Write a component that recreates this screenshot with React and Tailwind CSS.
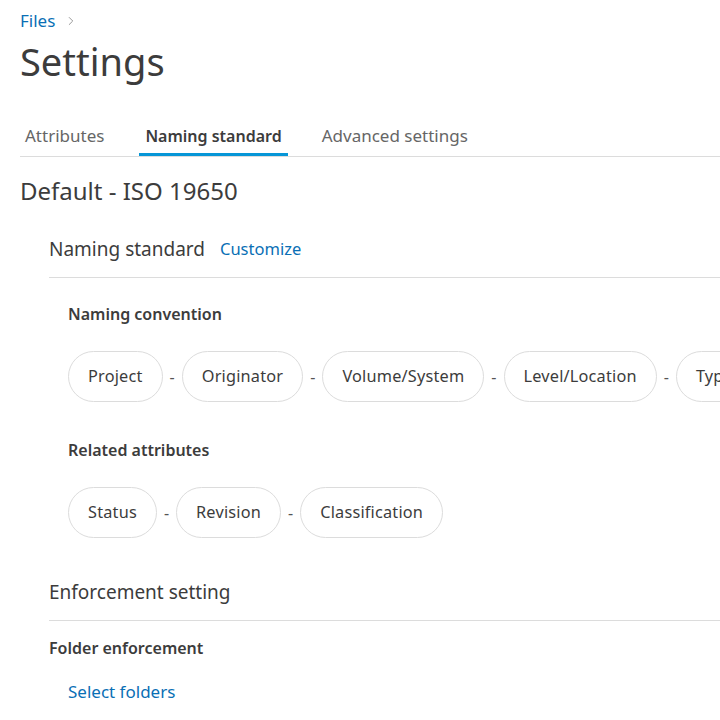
import { ChevronRight } from 'lucide-react';

const convention = ['Project', 'Originator', 'Volume/System', 'Level/Location', 'Type'];
const related = ['Status', 'Revision', 'Classification'];

function Pills({ items }) {
  return (
    <div className="flex items-center gap-[7px] whitespace-nowrap">
      {items.map((item, i) => (
        <div key={item} className="flex items-center gap-[7px] shrink-0">
          {i > 0 && <span className="text-[16px] text-[#555]">-</span>}
          <div className="h-[51px] px-[19px] flex items-center rounded-full border border-[#dcdcdc] text-[16.3px] text-[#3c3c3c] tracking-[0.2px]">
            {item}
          </div>
        </div>
      ))}
    </div>
  );
}

export default function App() {
  return (
    <div className="w-[720px] h-[720px] overflow-hidden bg-white text-[#3c3c3c]" style={{ fontFamily: '"Noto Sans", sans-serif' }}>
      <div className="pl-5">
        {/* Breadcrumb */}
        <div className="h-[41px] flex items-center gap-[9px]">
          <span className="text-[17px] text-[#0a6fb5] leading-[24px]">Files</span>
          <ChevronRight size={14} strokeWidth={1.5} className="text-[#8a8a8a]" />
        </div>
        <h1 className="text-[38px] leading-[40px] text-[#3c3c3c]">Settings</h1>

        {/* Tabs */}
        <div className="mt-[35px] flex border-b border-[#dcdcdc]">
          <div className="h-[40px] px-[5px] text-[17px] text-[#666] leading-[40px]">Attributes</div>
          <div className="ml-[30px] h-[40px] px-[6px] text-[16px] font-semibold text-[#3c3c3c] leading-[40px] border-b-[3px] border-[#0696d7]">
            Naming standard
          </div>
          <div className="ml-[34px] h-[40px] text-[17px] text-[#666] leading-[40px]">Advanced settings</div>
        </div>

        <h2 className="mt-[18px] text-[24px] leading-[32px]">Default - ISO 19650</h2>

        {/* Naming standard section */}
        <div className="ml-[29px] mt-[28px]">
          <div className="flex items-start gap-[15px] h-[43px] border-b border-[#dcdcdc]">
            <span className="text-[19px] leading-[28px]">Naming standard</span>
            <span className="text-[16.5px] leading-[28px] text-[#0a6fb5]">Customize</span>
          </div>
          <div className="pl-[19px]">
            <div className="mt-[24px] text-[16px] font-semibold leading-[24px]">Naming convention</div>
            <div className="mt-[25px]">
              <Pills items={convention} />
            </div>
            <div className="mt-[36px] text-[16px] font-semibold leading-[24px]">Related attributes</div>
            <div className="mt-[25px]">
              <Pills items={related} />
            </div>
          </div>

          {/* Enforcement */}
          <div className="mt-[40px] h-[43px] border-b border-[#dcdcdc] text-[19px] leading-[28px]">
            Enforcement setting
          </div>
          <div className="mt-[15px] text-[16px] font-semibold leading-[24px]">Folder enforcement</div>
          <div className="mt-[20px] pl-[19px] text-[17px] text-[#0a6fb5] leading-[24px]">Select folders</div>
        </div>
      </div>
    </div>
  );
}
